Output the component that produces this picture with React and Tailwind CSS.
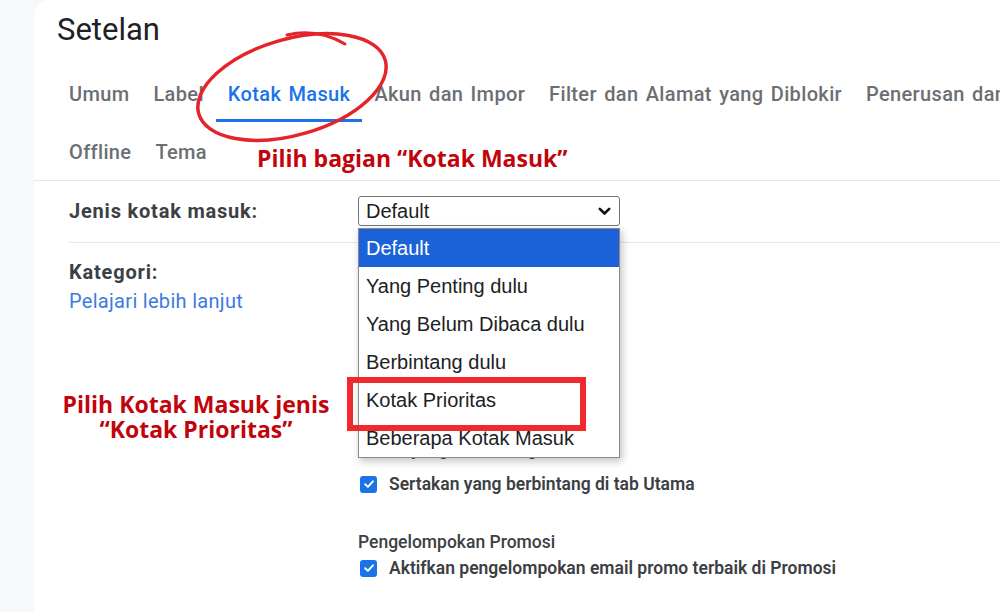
import React from "react";

const tabsRow1 = ["Umum", "Label", "Kotak Masuk", "Akun dan Impor", "Filter dan Alamat yang Diblokir", "Penerusan dan POP/IMAP"];
const tabsRow2 = ["Offline", "Tema"];
const options = ["Default", "Yang Penting dulu", "Yang Belum Dibaca dulu", "Berbintang dulu", "Kotak Prioritas", "Beberapa Kotak Masuk"];
const categories = ["Utama", "Sosial", "Promosi", "Pembaruan", "Forum"];

function Check() {
  return (
    <span className="w-[17px] h-[17px] rounded-[3px] bg-[#1a73e8] flex items-center justify-center shrink-0">
      <svg width="12" height="12" viewBox="0 0 12 12" fill="none">
        <path d="M2.2 6.3 L4.9 8.9 L9.9 3.3" stroke="white" strokeWidth="2" strokeLinecap="round" strokeLinejoin="round" />
      </svg>
    </span>
  );
}

function Tab({ name, active }) {
  return (
    <div
      className={`px-3 pt-[10px] pb-[13px] leading-[24px] border-b-[3px] whitespace-nowrap ${
        active ? "text-[#1a73e8] border-[#1a73e8]" : "text-[#6b6f74] border-transparent"
      }`}
    >
      {name}
    </div>
  );
}

export default function App() {
  return (
    <div className="w-[1000px] h-[612px] bg-[#f6f8fc] flex overflow-hidden relative font-['Roboto',sans-serif]">
      <div className="w-[34px] shrink-0" />

      <main className="flex-1 bg-white rounded-tl-[16px] relative">
        {/* HEADER */}
        <h1 className="pl-[23px] pt-[12px] text-[31px] leading-[36px] text-[#202124]">Setelan</h1>

        {/* TABS */}
        <div className="mt-[24px] pl-[23px] flex text-[20px] font-medium tracking-[0.35px] [word-spacing:2px]">
          {tabsRow1.map((t) => (
            <Tab key={t} name={t} active={t === "Kotak Masuk"} />
          ))}
        </div>
        <div className="pl-[23px] flex text-[20px] font-medium tracking-[0.35px]">
          {tabsRow2.map((t) => (
            <div key={t} className="px-3 pt-[18px] pb-[16px] leading-[24px] text-[#6b6f74]">
              {t}
            </div>
          ))}
        </div>
        <div className="border-t border-[#e5e7eb]" />

        {/* JENIS KOTAK MASUK */}
        <div className="pl-[35px] flex pt-[15px] pb-[16px]">
          <div className="w-[289px] font-bold text-[20px] leading-[30px] text-[#3c4043] tracking-[0.8px]">Jenis kotak masuk:</div>
          <div className="w-[262px] h-[30px] border border-[#767676] rounded-[3px] flex items-center justify-between pl-[7px] pr-[8px] text-[20px] text-[#202124] font-['Liberation_Sans',sans-serif]">
            <span>Default</span>
            <svg width="13" height="9" viewBox="0 0 13 9" fill="none">
              <path d="M1.8 1.8 L6.5 6.5 L11.2 1.8" stroke="#111" strokeWidth="2.6" strokeLinecap="round" strokeLinejoin="round" />
            </svg>
          </div>
        </div>
        <div className="ml-[35px] border-t border-[#e5e7eb]" />

        {/* KATEGORI */}
        <div className="pl-[35px] flex">
          <div className="w-[289px] pt-[17px]">
            <div className="font-bold text-[20px] leading-[24px] text-[#3c4043] tracking-[0.8px]">Kategori:</div>
            <div className="mt-[5px] text-[20px] leading-[24px] text-[#3d7be0] tracking-[0.3px]">Pelajari lebih lanjut</div>
          </div>
          <div className="pt-[15px] text-[17.5px] text-[#3c4043]">
            {categories.map((c) => (
              <div key={c} className="h-[32px] flex items-center gap-3 pl-[2px]">
                <Check />
                <span className="font-medium">{c}</span>
              </div>
            ))}
            <div className="mt-[19px] leading-[24px] font-medium">Pesan yang berbintang</div>
            <div className="mt-[11px] flex items-center gap-3 pl-[2px] leading-[24px] font-semibold">
              <Check />
              <span>Sertakan yang berbintang di tab Utama</span>
            </div>
            <div className="mt-[34px] leading-[24px] font-medium">Pengelompokan Promosi</div>
            <div className="mt-[2px] flex items-center gap-3 pl-[2px] leading-[24px] font-semibold">
              <Check />
              <span>Aktifkan pengelompokan email promo terbaik di Promosi</span>
            </div>
          </div>
        </div>

        {/* DROPDOWN */}
        <div className="absolute left-[324px] top-[228px] w-[262px] bg-white border border-[#8a8a8a] shadow-[2px_3px_8px_rgba(0,0,0,0.25)] font-['Liberation_Sans',sans-serif] text-[20px]">
          {options.map((o, i) => (
            <div
              key={o}
              className={`h-[38px] flex items-center pl-[7px] ${i === 0 ? "bg-[#1b62d8] text-white" : "text-[#202124]"}`}
            >
              {o}
            </div>
          ))}
        </div>

        {/* ANNOTATIONS */}
        <div className="absolute left-[313px] top-[377px] w-[239px] h-[54px] border-[6px] border-[#f02a2c]" />
        <div className="absolute left-[223px] top-[144px] text-[23px] leading-[28px] font-bold text-[#c1040c] font-['Open_Sans',sans-serif] whitespace-nowrap">
          Pilih bagian “Kotak Masuk”
        </div>
        <div className="absolute left-[14px] top-[392px] w-[296px] text-center text-[23px] leading-[25px] font-bold text-[#c1040c] font-['Open_Sans',sans-serif]">
          Pilih Kotak Masuk jenis
          <br />
          “Kotak Prioritas”
        </div>
      </main>

      {/* hand drawn circle */}
      <svg className="absolute inset-0 pointer-events-none" width="1000" height="612" viewBox="0 0 1000 612" fill="none">
        <ellipse cx="292" cy="87" rx="97" ry="48" transform="rotate(-16 292 87)" stroke="#e3242b" strokeWidth="3.5" />
        <path d="M287 35 Q317 28 345 44" stroke="#e3242b" strokeWidth="3" strokeLinecap="round" />
      </svg>
    </div>
  );
}
